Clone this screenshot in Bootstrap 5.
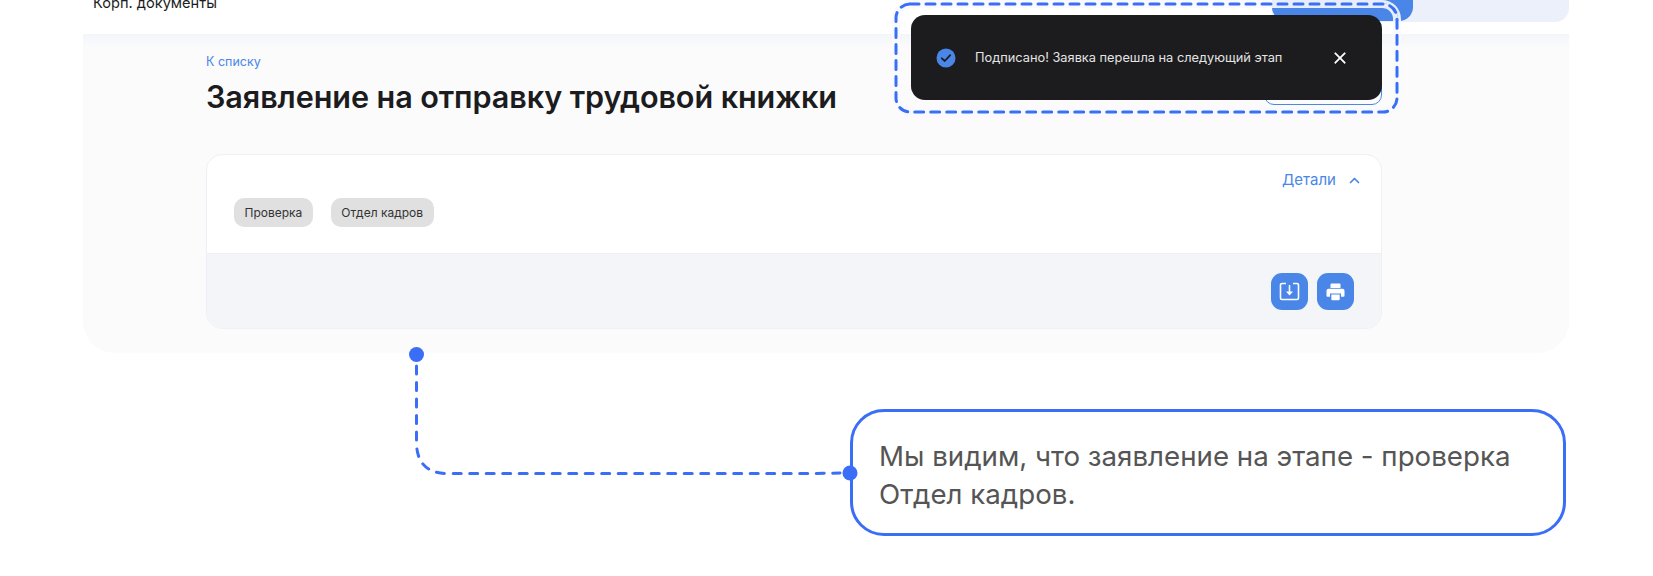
<!doctype html>
<html lang="ru">
<head>
<meta charset="utf-8">
<title>Заявление</title>
<link href="https://cdn.jsdelivr.net/npm/bootstrap@5.3.0/dist/css/bootstrap.min.css" rel="stylesheet">
<style>
html,body{height:576px;overflow:hidden;background:#fff}
body{position:relative;font-family:Inter,"Noto Sans",sans-serif;color:#1c1c1e}
.app-panel{margin-left:83px;width:1486px;height:353px;background:#fbfbfc;border-radius:0 0 32px 32px;overflow:hidden}
.app-head{height:34px;background:#fff;overflow:hidden;align-items:flex-start}
.head-label{font-size:14.6px;line-height:20px;margin:-7px 0 0 10px;color:#1c1c1e}
.head-tools{width:297px;height:22px;background:#ebf0fa;border-radius:0 0 14px 0}
.head-blue{display:block;width:141px;height:21px;background:#4a86e8;border-radius:0 0 14px 14px}
.app-main{padding:0 187px 0 123px;background:linear-gradient(#f3f5f9,#fbfbfc 14px)}
.back-link{display:block;padding-top:19px;font-size:12.5px;line-height:18px;color:#4a86e8;text-decoration:none}
.title-row{margin-top:4px;height:44px}
.doc-title{font-size:30.6px;line-height:44px;font-weight:600;margin:0;color:#1c1c1e;letter-spacing:-.1px}
.ghost-btn{display:block;width:118px;height:30px;border:1.5px solid #4a86e8;border-radius:10px}
.doc-card{margin-top:35px;border:1px solid #eef0f6;border-radius:16px;background:#fff;overflow:hidden;height:175px}
.doc-top{height:99px;padding:15px 21px 0 27px;border-bottom:1px solid #eef0f6}
.details{font-size:15px;line-height:20px;color:#4a86e8;gap:13px}
.pills{margin-top:8px;gap:18px}
.stage-pill{background:#e0e0e0;color:#333;font-size:12px;font-weight:400;line-height:29px;padding:0 10.5px;border-radius:10px}
.doc-foot{height:75px;background:#f4f5f8;padding:19px 27px 0 0;gap:9px}
.act-btn{width:37px;height:37px;padding:0;background:#4a86e8;border:0;border-radius:11px}
.toast-frame{position:absolute;left:895px;top:3px;width:503px;height:110px;border-radius:16px;box-shadow:0 0 0 3px rgba(248,250,253,.9),inset 0 0 0 5px rgba(248,250,253,.9)}
.notice{position:absolute;left:911px;top:15px;width:471px;height:85px;background:#1c1c1e;border:0;border-radius:14px;box-shadow:none;color:#e4e4e4;font-size:12.8px;padding:0 35px 0 25px;gap:19px}
.notice-text{flex:1 1 auto}
.notice .btn-close{opacity:1;width:14px;height:14px;background-size:14px;padding:0;margin:0}
.callout{position:absolute;left:850px;top:409px;width:716px;height:127px;background:#fff;border:3px solid #3b6ef6;border-radius:34px;padding:25px 26px;font-size:27.7px;line-height:38px;color:#555;white-space:nowrap}
.overlay{position:absolute;left:0;top:0;pointer-events:none}
</style>
</head>
<body>
<div class="app-panel">
  <header class="app-head d-flex justify-content-between">
    <span class="head-label">Корп. документы</span>
    <div class="head-tools"><span class="head-blue"></span></div>
  </header>
  <main class="app-main">
    <a class="back-link" href="#">К списку</a>
    <div class="title-row d-flex justify-content-between">
      <h1 class="doc-title">Заявление на отправку трудовой книжки</h1>
      <span class="ghost-btn"></span>
    </div>
    <section class="doc-card">
      <div class="doc-top">
        <div class="d-flex justify-content-end align-items-center details">
          <span>Детали</span>
          <svg width="11" height="7" viewBox="0 0 11 7" fill="none" stroke="#4a86e8" stroke-width="1.7" stroke-linecap="round" stroke-linejoin="round"><path d="M1.5 5.5 5.5 1.5 9.5 5.5"/></svg>
        </div>
        <div class="d-flex pills">
          <span class="badge stage-pill">Проверка</span>
          <span class="badge stage-pill">Отдел кадров</span>
        </div>
      </div>
      <div class="doc-foot d-flex justify-content-end">
        <button class="btn act-btn d-flex align-items-center justify-content-center" type="button" aria-label="Скачать">
          <svg width="21" height="20" viewBox="0 0 21 20" fill="none" stroke="#fff" stroke-width="1.6"><path d="M7 1.500H3a1.500 1.500 0 0 0-1.500 1.500v13A1.500 1.500 0 0 0 3 17.500h15a1.500 1.500 0 0 0 1.500-1.500V3A1.500 1.500 0 0 0 18 1.500h-4"/><path d="M10.500 3v8"/><path d="M7 9.500h7l-3.500 4z" fill="#fff" stroke="none"/></svg>
        </button>
        <button class="btn act-btn d-flex align-items-center justify-content-center" type="button" aria-label="Печать">
          <svg width="19" height="18" viewBox="0 0 19 18" fill="#fff"><path d="M4.500 1.500A1 1 0 0 1 5.500.5h8a1 1 0 0 1 1 1V5h-10z"/><path d="M2.500 5.800h14a2 2 0 0 1 2 2v5a1 1 0 0 1-1 1h-2.500V10.500h-11V13.800H1.500a1 1 0 0 1-1-1v-5a2 2 0 0 1 2-2z"/><path d="M5.300 11.500h8.400v4.800a1 1 0 0 1-1 1H6.300a1 1 0 0 1-1-1z"/></svg>
        </button>
      </div>
    </section>
  </main>
</div>

<div class="toast-frame"></div>
<div class="toast show notice d-flex align-items-center" role="status">
  <svg width="20" height="20" viewBox="0 0 20 20" class="flex-shrink-0"><circle cx="10" cy="10" r="9.500" fill="#4a86e8"/><path d="M5.800 10.300 8.800 13 14.200 7.200" fill="none" stroke="#1c1c1e" stroke-width="1.800" stroke-linecap="round" stroke-linejoin="round"/></svg>
  <span class="notice-text">Подписано! Заявка перешла на следующий этап</span>
  <button type="button" class="btn-close btn-close-white" aria-label="Закрыть"></button>
</div>

<div class="callout">Мы видим, что заявление на этапе - проверка<br>Отдел кадров.</div>

<svg class="overlay" width="1653" height="576" viewBox="0 0 1653 576" fill="none">
  <rect x="896" y="4" width="501" height="108" rx="14" stroke="#3b6ef6" stroke-width="3" stroke-dasharray="9 7" stroke-linecap="round"/>
  <path d="M416.500 366V442Q416.500 473.500 448 473.500H812L840 473" stroke="#3b6ef6" stroke-width="3" stroke-dasharray="8 8.500" stroke-linecap="round"/>
  <circle cx="416.500" cy="354.500" r="7.500" fill="#3b6ef6"/>
  <circle cx="850" cy="473" r="7.500" fill="#3b6ef6"/>
</svg>
<script src="https://cdn.jsdelivr.net/npm/bootstrap@5.3.0/dist/js/bootstrap.bundle.min.js"></script>
</body>
</html>
